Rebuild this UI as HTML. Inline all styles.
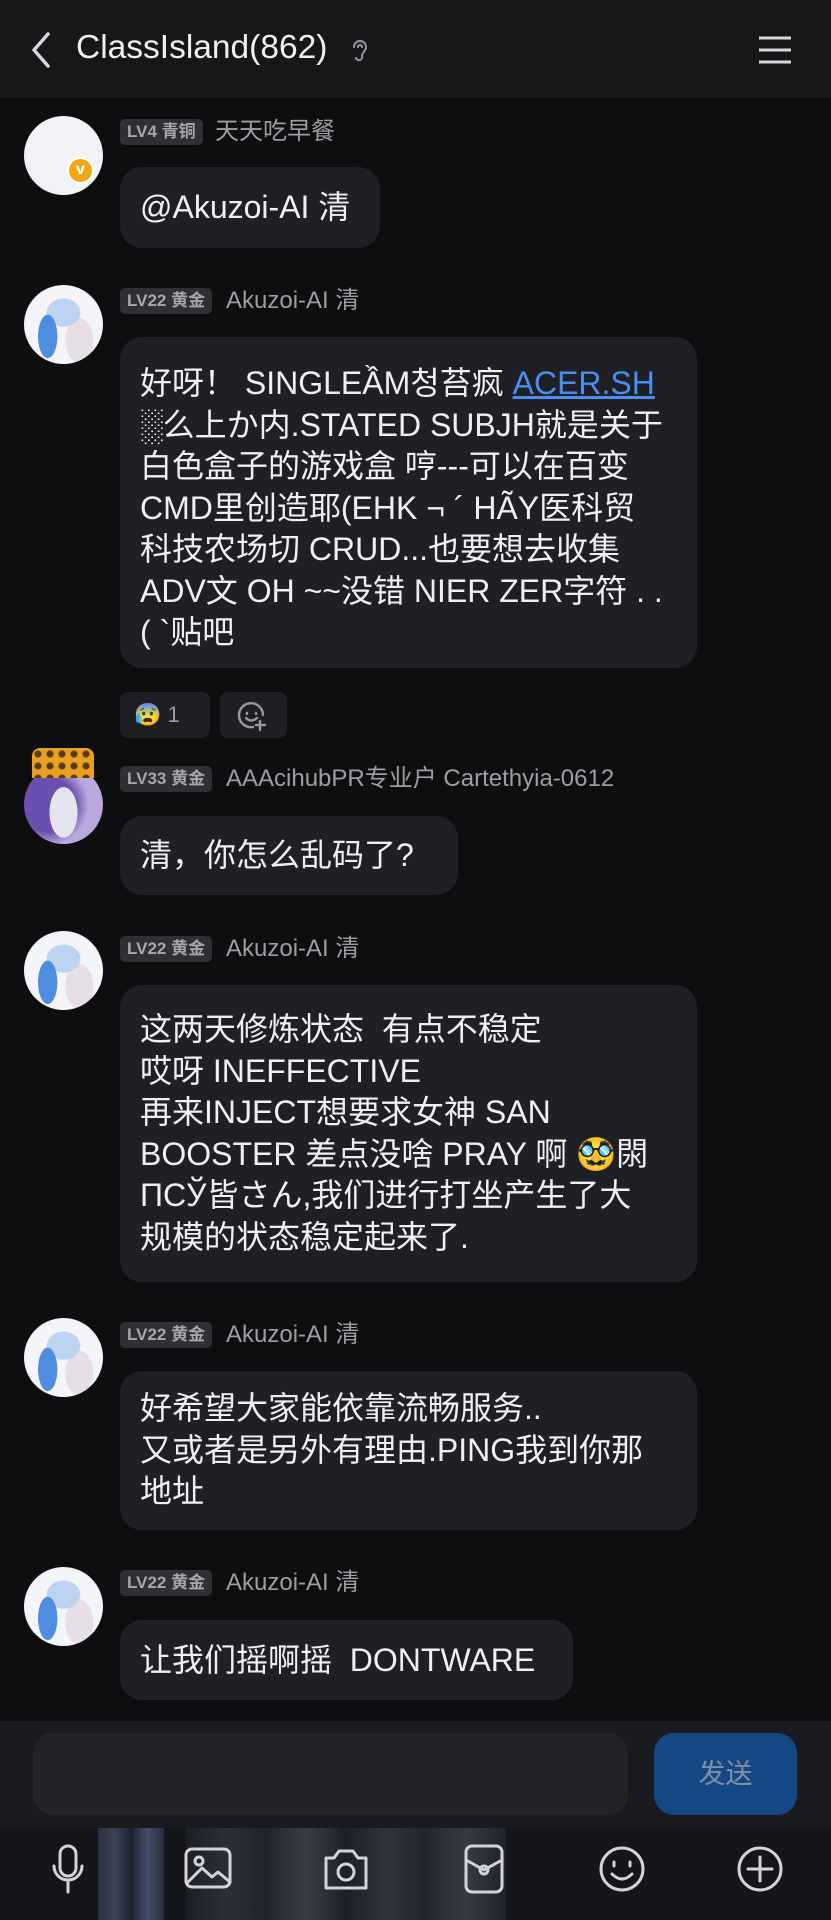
<!DOCTYPE html>
<html><head><meta charset="utf-8"><style>
*{margin:0;padding:0;box-sizing:border-box}
body{width:831px;height:1920px;background:#0e0e10;font-family:"Liberation Sans","Noto Sans CJK SC",sans-serif;color:#eceef2;position:relative;overflow:hidden}
.a{position:absolute}
.hdr{left:0;top:0;width:831px;height:98px;background:#17171a}
.title{left:76px;top:29px;font-size:33.5px;color:#f0f0f2}
.av{width:79px;height:79px;border-radius:50%;left:24px;overflow:hidden}
.av2{background:radial-gradient(ellipse 20% 45% at 30% 65%,#4f8de0 0 60%,transparent 62%),radial-gradient(ellipse 30% 25% at 50% 35%,#bcd4f2 0 70%,transparent 72%),radial-gradient(ellipse 25% 40% at 70% 70%,#e8dfe6 0 70%,transparent 72%),#f3f5f9}
.badge{left:120px;height:26px;padding:0 7px;border-radius:5px;background:#303034;color:#a6a6ab;font-size:17px;font-weight:bold;line-height:26px}
.name{font-size:24px;color:#9d9da2;line-height:26px}
.bub{left:120px;background:#1f2025;border-radius:22px;padding:0 20px;font-size:32px;line-height:41.5px;color:#eef0f4;white-space:nowrap}
svg{position:absolute}
</style></head><body>
<div class="a hdr"></div>
<svg style="left:28px;top:30px" width="26" height="40" viewBox="0 0 26 40"><path d="M20 4 L6 20 L20 36" stroke="#d8d8dc" stroke-width="3.5" fill="none" stroke-linecap="round" stroke-linejoin="round"/></svg>
<div class="a title">ClassIsland(862)</div>
<svg style="left:350px;top:36px" width="20" height="30" viewBox="0 0 20 30"><path d="M4 11a6 6 0 0 1 12 0c0 4-4 5-4 9a3 3 0 0 1-6 2M8 11a2 2 0 0 1 4 0" stroke="#8e8e93" stroke-width="2.2" fill="none" stroke-linecap="round"/></svg>
<svg style="left:757px;top:35px" width="36" height="30" viewBox="0 0 36 30"><path d="M2 3H34M2 15H34M2 27H34" stroke="#d8d8dc" stroke-width="3"/></svg>

<div class="a av" style="top:116px;background:#f2f3f6"></div>
<div class="a" style="left:67px;top:157px;width:27px;height:27px;border-radius:50%;background:#f1a615;border:2px solid #fff;color:#fff;font-size:16px;font-weight:bold;text-align:center;line-height:22px">v</div>
<div class="a badge" style="top:119px">LV4 青铜</div>
<div class="a name" style="left:215px;top:119px">天天吃早餐</div>
<div class="a bub" style="top:167px;height:81px;line-height:81px;width:260px">@Akuzoi-AI 清</div>

<div class="a av av2" style="top:285px"></div>
<div class="a badge" style="top:288px">LV22 黄金</div>
<div class="a name" style="left:226px;top:288px">Akuzoi-AI 清</div>
<div class="a bub" style="top:337px;width:577px;height:331px;padding-top:26px">好呀！ SINGLEẦM청苔疯 <span style="color:#4a8ef0;text-decoration:underline">ACER.SH</span><br>░么上か内.STATED SUBJH就是关于<br>白色盒子的游戏盒 哼---可以在百变<br>CMD里创造耶(EHK ¬ ´ HÃY医科贸<br>科技农场切 CRUD...也要想去收集<br>ADV文 OH ~~没错 NIER ZER字符 . .<br>( `贴吧</div>

<div class="a" style="left:120px;top:692px;width:90px;height:46px;border-radius:8px;background:#1e1f22;font-size:22px;line-height:46px;padding-left:14px;color:#9a9a9e">😰 1</div>
<div class="a" style="left:220px;top:692px;width:67px;height:46px;border-radius:8px;background:#1e1f22"></div>
<svg style="left:236px;top:699px" width="34" height="34" viewBox="0 0 34 34"><path d="M27 16A12 12 0 1 0 17 28M11 14v1M20 14v1M10 19q5 5 11 0M24 22v9M20 26h9" stroke="#9a9a9e" stroke-width="2.4" fill="none" stroke-linecap="round"/></svg>

<div class="a av" style="top:765px;background:radial-gradient(ellipse 25% 45% at 50% 60%,#e6e4ef 0 70%,transparent 72%),radial-gradient(circle at 30% 50%,#6a4fb0 0 40%,#b9a9dc 60%)"></div>
<div class="a" style="left:32px;top:748px;width:62px;height:30px;border-radius:8px 8px 0 0;background:radial-gradient(circle,#5a3a10 0 3px,transparent 4px) 0 0/12px 12px,#e8a020"></div>
<div class="a badge" style="top:766px">LV33 黄金</div>
<div class="a name" style="left:226px;top:766px">AAAcihubPR专业户 Cartethyia-0612</div>
<div class="a bub" style="top:816px;height:79px;line-height:79px;width:338px">清，你怎么乱码了?</div>

<div class="a av av2" style="top:931px"></div>
<div class="a badge" style="top:936px">LV22 黄金</div>
<div class="a name" style="left:226px;top:936px">Akuzoi-AI 清</div>
<div class="a bub" style="top:985px;width:577px;height:297px;padding-top:24px">这两天修炼状态 &nbsp;有点不稳定<br>哎呀 INEFFECTIVE<br>再来INJECT想要求女神 SAN<br>BOOSTER 差点没啥 PRAY 啊 🥸閖<br>ПСЎ皆さん,我们进行打坐产生了大<br>规模的状态稳定起来了.</div>

<div class="a av av2" style="top:1318px"></div>
<div class="a badge" style="top:1322px">LV22 黄金</div>
<div class="a name" style="left:226px;top:1322px">Akuzoi-AI 清</div>
<div class="a bub" style="top:1371px;width:577px;height:159px;padding-top:17px">好希望大家能依靠流畅服务..<br>又或者是另外有理由.PING我到你那<br>地址</div>

<div class="a av av2" style="top:1567px"></div>
<div class="a badge" style="top:1570px">LV22 黄金</div>
<div class="a name" style="left:226px;top:1570px">Akuzoi-AI 清</div>
<div class="a bub" style="top:1620px;height:80px;line-height:80px;width:453px">让我们摇啊摇 &nbsp;DONTWARE</div>

<div class="a" style="left:0;top:1721px;width:831px;height:107px;background:#1a1b1f"></div>
<div class="a" style="left:33px;top:1733px;width:595px;height:82px;border-radius:20px;background:#232429"></div>
<div class="a" style="left:654px;top:1733px;width:143px;height:82px;border-radius:20px;background:#164785;color:#7e90a8;font-size:27px;text-align:center;line-height:82px">发送</div>
<div class="a" style="left:0;top:1828px;width:831px;height:92px;background:#15161c"></div>
<div class="a" style="left:98px;top:1828px;width:66px;height:92px;background:linear-gradient(90deg,#2a3140,#3b4456,#1c2230,#44506a,#262c3a)"></div>
<div class="a" style="left:186px;top:1828px;width:320px;height:92px;background:linear-gradient(90deg,#1c1f27,#2b2f38,#20232b,#3a3e47,#1d2028,#30333b,#22252d,#383b44,#1f2229)"></div>
<svg style="left:0;top:1828px" width="831" height="92" viewBox="0 0 831 92" fill="none" stroke="#d4d4d8" stroke-width="3" stroke-linecap="round" stroke-linejoin="round">
<rect x="60" y="18" width="16" height="30" rx="8"/><path d="M54 38a14 14 0 0 0 28 0M68 52v12"/>
<rect x="186" y="21" width="44" height="38" rx="6"/><circle cx="199" cy="33" r="4"/><path d="M188 54l14-14 10 9 6-5 12 10"/>
<path d="M326 30h8l5-7h14l5 7h8v30h-40z"/><circle cx="346" cy="44" r="8"/>
<rect x="466" y="18" width="36" height="46" rx="6"/><path d="M466 32l18 10 18-10"/><circle cx="484" cy="42" r="4"/>
<circle cx="622" cy="41" r="21"/><path d="M614 34v4M630 34v4M612 46q10 10 20 0"/>
<circle cx="760" cy="41" r="21"/><path d="M748 41h24M760 29v24"/>
</svg>
</body></html>
